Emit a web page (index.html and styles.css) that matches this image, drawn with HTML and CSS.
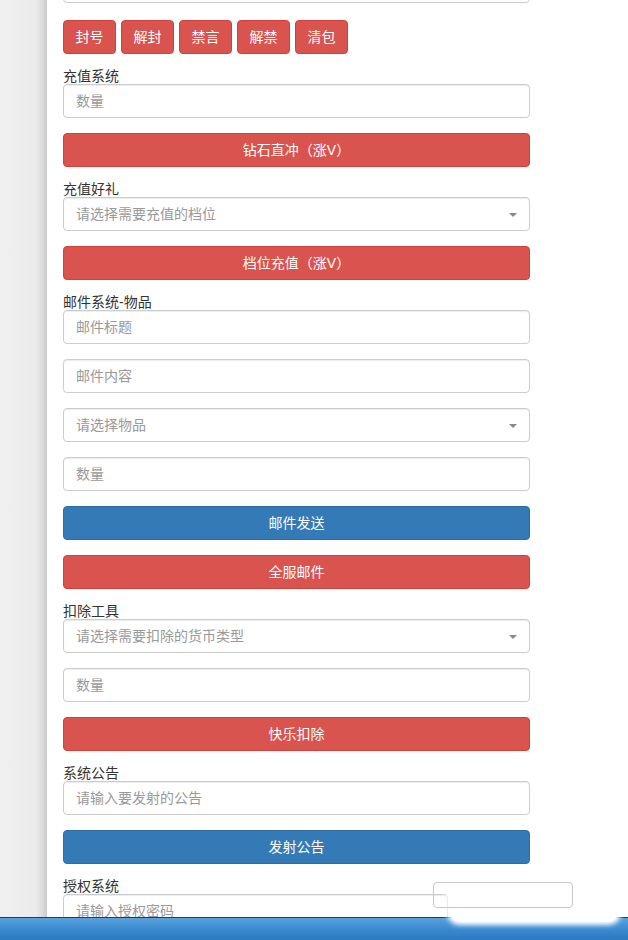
FILE: index.html
```html
<!DOCTYPE html>
<html lang="zh-CN">
<head>
  <meta charset="UTF-8" />
  <meta name="viewport" content="width=device-width, initial-scale=1.0"/>
  <title>GM管理后台</title>
  <link rel="stylesheet" href="styles.css">
</head>
<body>

  <div class="page">
    <div class="side"></div>
    <div class="panel">
      <form class="gm" onsubmit="return false">
        <input type="text" class="field" placeholder="角色名" />

        <div class="btn-row">
          <button class="btn btn-danger btn-sm">封号</button>
          <button class="btn btn-danger btn-sm">解封</button>
          <button class="btn btn-danger btn-sm">禁言</button>
          <button class="btn btn-danger btn-sm">解禁</button>
          <button class="btn btn-danger btn-sm">清包</button>
        </div>

        <div class="group">
          <label>充值系统</label>
          <input type="text" class="field" placeholder="数量" />
        </div>
        <button class="btn btn-danger btn-block">钻石直冲（涨V）</button>

        <div class="group">
          <label>充值好礼</label>
          <div class="select">请选择需要充值的档位</div>
        </div>
        <button class="btn btn-danger btn-block">档位充值（涨V）</button>

        <div class="group">
          <label>邮件系统-物品</label>
          <input type="text" class="field" placeholder="邮件标题" />
        </div>
        <input type="text" class="field" placeholder="邮件内容" />
        <div class="select">请选择物品</div>
        <input type="text" class="field" placeholder="数量" />
        <button class="btn btn-primary btn-block">邮件发送</button>
        <button class="btn btn-danger btn-block">全服邮件</button>

        <div class="group">
          <label>扣除工具</label>
          <div class="select">请选择需要扣除的货币类型</div>
        </div>
        <input type="text" class="field" placeholder="数量" />
        <button class="btn btn-danger btn-block">快乐扣除</button>

        <div class="group">
          <label>系统公告</label>
          <input type="text" class="field" placeholder="请输入要发射的公告" />
        </div>
        <button class="btn btn-primary btn-block">发射公告</button>

        <div class="group">
          <label>授权系统</label>
          <input type="text" class="field field-short" placeholder="请输入授权密码" />
        </div>
      </form>
    </div>
  </div>

  <div class="taskbar"></div>
  <div class="popup"><div class="popup-box"></div></div>

</body>
</html>
```

FILE: styles.css
```css
* {
  box-sizing: border-box;
}
body {
  margin: 0;
  font-family: "Liberation Sans", "Noto Sans CJK SC", sans-serif;
  font-size: 14px;
  color: #333;
  background: #ededed;
  overflow: hidden;
}
.page {
  display: flex;
  min-height: 940px;
}
.side {
  width: 47px;
  flex: none;
  background: linear-gradient(to right, #f0f0f0 0, #ebebeb 36px, #dcdcdc 42px, #c9c9c9 47px);
}
.panel {
  flex: 1;
  background: #fff;
  padding-left: 16px;
}
.gm {
  width: 467px;
  margin-top: -31px;
  display: flex;
  flex-direction: column;
  gap: 15px;
}
.group label {
  display: block;
  height: 15px;
  line-height: 15px;
  font-size: 14px;
  color: #333;
}
.field, .select {
  display: block;
  width: 100%;
  height: 34px;
  padding: 6px 12px;
  font: inherit;
  font-size: 14px;
  color: #555;
  background: #fff;
  border: 1px solid #ccc;
  border-radius: 4px;
  box-shadow: inset 0 1px 1px rgba(0,0,0,0.075);
  outline: none;
}
.field::placeholder {
  color: #999;
}
.field-short {
  width: 385px;
}
.select {
  position: relative;
  line-height: 20px;
  color: #999;
}
.select::after {
  content: "";
  position: absolute;
  right: 12px;
  top: 15px;
  border-left: 4px solid transparent;
  border-right: 4px solid transparent;
  border-top: 4px solid #888;
}
.btn-row {
  display: flex;
  gap: 5px;
  padding-top: 2px;
}
.btn {
  height: 34px;
  padding: 6px 12px;
  font: inherit;
  font-size: 14px;
  line-height: 20px;
  color: #fff;
  border: 1px solid transparent;
  border-radius: 4px;
  cursor: pointer;
}
.btn-sm {
  width: 53px;
  padding: 0;
}
.btn-danger {
  background: #d9534f;
  border-color: #d43f3a;
}
.btn-primary {
  background: #337ab7;
  border-color: #2e6da4;
}
.btn-block {
  width: 100%;
}
.taskbar {
  position: fixed;
  z-index: 3;
  left: 0;
  right: 0;
  bottom: 0;
  height: 23px;
  border-top: 1px solid #1b3d5e;
  background: linear-gradient(to bottom, #5aa2dd 0, #3b8bd0 50%, #2c78c2 100%);
}
.popup {
  position: fixed;
  z-index: 4;
  left: 450px;
  top: 879px;
  width: 168px;
  height: 43px;
  background: #fff;
  border-radius: 0 0 10px 10px;
  box-shadow: 0 0 5px 3px #fff;
}
.popup-box {
  margin: 3px 0 0 -17px;
  width: 140px;
  height: 26px;
  border: 1px solid #c8c8c8;
  border-radius: 4px;
}
```
